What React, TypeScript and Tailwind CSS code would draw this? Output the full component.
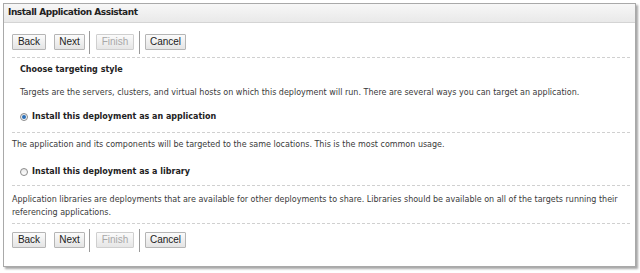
import React from 'react';

const Btn: React.FC<{ label: string; disabled?: boolean; w: string }> = ({ label, disabled, w }) => (
  <button
    className={`${w} h-[16px] border border-[#b5b5b5] rounded-[1px] bg-gradient-to-b from-[#fbfbfb] to-[#e4e4e4] text-[10px] leading-none flex items-center justify-center ${
      disabled ? 'text-[#a8a8a8] border-[#cfcfcf] from-[#f2f2f2] to-[#e6e6e6]' : 'text-[#222]'
    }`}
    style={{ fontFamily: '"Liberation Sans", Arial, sans-serif' }}
  >
    {label}
  </button>
);

const ButtonRow: React.FC = () => (
  <div className="flex items-center h-[24px]">
    <Btn label="Back" w="w-[34px]" />
    <div className="w-[8px]" />
    <Btn label="Next" w="w-[31px]" />
    <div className="w-[8px] flex justify-center h-[23px]">
      <div className="w-px bg-[#9a9a9a] h-full" />
    </div>
    <div className="w-[3px]" />
    <Btn label="Finish" disabled w="w-[38px]" />
    <div className="w-[11px] flex justify-center h-[23px]">
      <div className="w-px bg-[#9a9a9a] h-full" />
    </div>
    <Btn label="Cancel" w="w-[41px]" />
  </div>
);

const Dotted: React.FC = () => <div className="border-t border-dashed border-[#d0d0d0] mr-[5px]" />;

const Radio: React.FC<{ checked?: boolean }> = ({ checked }) => (
  <span className="w-[8px] h-[8px] rounded-full border border-[#8a8a8a] bg-gradient-to-b from-[#e8e8e8] to-[#ffffff] flex items-center justify-center shrink-0">
    {checked && <span className="w-[4px] h-[4px] rounded-full bg-[#2a6fb8]" />}
  </span>
);

const App: React.FC = () => {
  return (
    <div className="w-[640px] h-[273px] bg-white pt-[3px] pl-[3px]" style={{ fontFamily: '"DejaVu Sans", Verdana, sans-serif' }}>
      <div className="w-[633px] h-[264px] border border-[#a9a9a9] shadow-[2px_2px_2px_rgba(0,0,0,0.35)] bg-white flex flex-col">
        <div className="h-[19px] bg-gradient-to-b from-[#f7f7f7] to-[#e9e9e9] border-b border-[#d4d4d4] flex items-center pl-[4px] text-[9px] font-bold text-[#222] tracking-[-0.45px]">
          Install Application Assistant
        </div>
        <div className="pl-[8px] pt-[7px] flex flex-col text-[8px] text-[#3a3a3a]">
          <ButtonRow />
          <div className="mt-[3px]"><Dotted /></div>
          <div className="pl-[8px] mt-[6px] h-[12px] flex items-center font-bold text-[#222]">Choose targeting style</div>
          <div className="pl-[8px] mt-[11px] h-[12px] flex items-center">
            Targets are the servers, clusters, and virtual hosts on which this deployment will run. There are several ways you can target an application.
          </div>
          <div className="pl-[8px] mt-[12px] h-[12px] flex items-center gap-[4px] font-bold text-[#222]">
            <Radio checked />
            <span>Install this deployment as an application</span>
          </div>
          <div className="mt-[9px]"><Dotted /></div>
          <div className="mt-[6px] h-[12px] flex items-center">
            The application and its components will be targeted to the same locations. This is the most common usage.
          </div>
          <div className="pl-[8px] mt-[15px] h-[12px] flex items-center gap-[4px] font-bold text-[#222]">
            <Radio />
            <span>Install this deployment as a library</span>
          </div>
          <div className="mt-[7px]"><Dotted /></div>
          <div className="mt-[7px] leading-[13px] pr-[6px]">
            Application libraries are deployments that are available for other deployments to share. Libraries should be available on all of the targets running their referencing applications.
          </div>
          <div className="mt-[4px]"><Dotted /></div>
          <div className="mt-[4px]">
            <ButtonRow />
          </div>
        </div>
      </div>
    </div>
  );
};

export default App;
